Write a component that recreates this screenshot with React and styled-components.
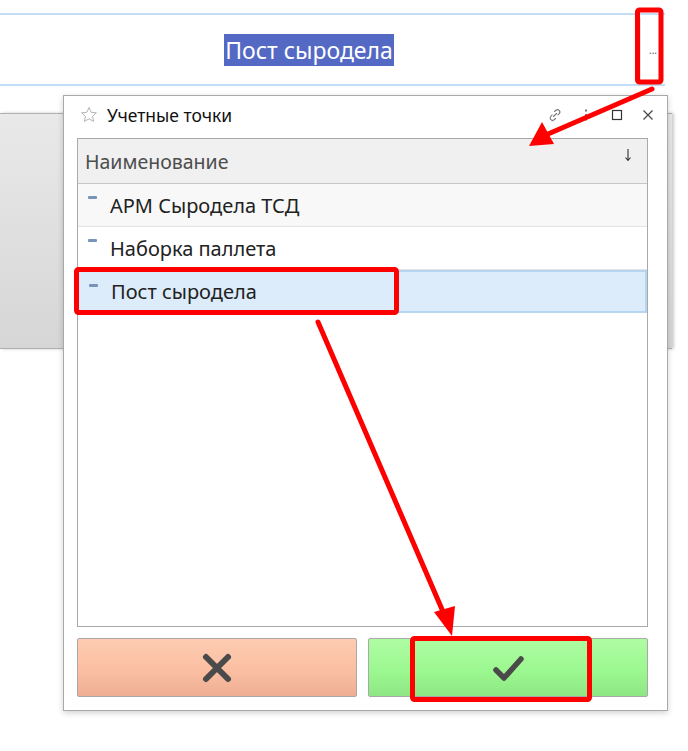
import React from 'react';
import styled, { createGlobalStyle } from 'styled-components';

const GlobalStyle = createGlobalStyle`
  *, *::before, *::after {
    box-sizing: border-box;
  }
  html, body {
    margin: 0;
    padding: 0;
    background: #fff;
  }
  body {
    font-family: "Noto Sans", "Open Sans", sans-serif;
  }
`;

const rows = [
  { id: 1, name: 'АРМ Сыродела ТСД' },
  { id: 2, name: 'Наборка паллета' },
  { id: 3, name: 'Пост сыродела', selected: true },
];

export default function App() {
  return (
    <Page>
      <GlobalStyle />
      <Field>
        <FieldValue>
          <Selected>Пост сыродела</Selected>
        </FieldValue>
        <FieldButton>...</FieldButton>
      </Field>

      <BackPanel />

      <Dialog>
        <TitleBar>
          <Star viewBox="0 0 18 18">
            <path
              d="M9 1.5l2.2 4.8 5.2.5-3.9 3.5 1.1 5.1L9 12.8l-4.6 2.6 1.1-5.1-3.9-3.5 5.2-.5z"
              fill="none"
              stroke="#b4b4b4"
              strokeWidth="1"
            />
          </Star>
          <Title>Учетные точки</Title>
          <TitleTools>
            <Tool viewBox="0 0 16 16" width="16" height="16">
              <path
                d="M6.5 9.5l3-3M7.5 4.5l1.2-1.2a2.4 2.4 0 0 1 3.4 3.4L10.9 8M8.5 11.5l-1.2 1.2a2.4 2.4 0 0 1-3.4-3.4L5.1 8"
                fill="none"
                stroke="#777"
                strokeWidth="1.1"
                strokeLinecap="round"
              />
            </Tool>
            <Tool viewBox="0 0 16 16" width="16" height="16">
              <rect x="7" y="2.5" width="2" height="2" fill="#777" />
              <rect x="7" y="7" width="2" height="2" fill="#777" />
              <rect x="7" y="11.5" width="2" height="2" fill="#777" />
            </Tool>
            <Tool viewBox="0 0 16 16" width="16" height="16">
              <rect x="3.5" y="3.5" width="9" height="9" fill="none" stroke="#333" strokeWidth="1.2" />
            </Tool>
            <Tool viewBox="0 0 16 16" width="16" height="16">
              <path d="M3.5 3.5l9 9M12.5 3.5l-9 9" stroke="#444" strokeWidth="1.2" />
            </Tool>
          </TitleTools>
        </TitleBar>

        <Table>
          <HeaderRow>
            <HeaderCell>Наименование</HeaderCell>
            <SortArrow viewBox="0 0 8 14" width="8" height="14">
              <path d="M4 1v11M1.5 9.5L4 12.5l2.5-3" fill="none" stroke="#333" strokeWidth="1.1" />
            </SortArrow>
          </HeaderRow>
          {rows.map((r, i) => (
            <Row key={r.id} $selected={r.selected} $shaded={i === 0}>
              <Marker />
              <RowText>{r.name}</RowText>
            </Row>
          ))}
        </Table>

        <Buttons>
          <ActionButton $kind="cancel">
            <svg width="34" height="34" viewBox="0 0 34 34">
              <path d="M6 6l22 22M28 6L6 28" stroke="#4a4a4a" strokeWidth="6" strokeLinecap="round" />
            </svg>
          </ActionButton>
          <ActionButton $kind="ok">
            <svg width="34" height="30" viewBox="0 0 34 30">
              <path d="M5 17l8 8L30 6" fill="none" stroke="#4a4a4a" strokeWidth="5.5" strokeLinecap="round" strokeLinejoin="round" />
            </svg>
          </ActionButton>
        </Buttons>
      </Dialog>

      <Marks width="688" height="751" viewBox="0 0 688 751">
        <g fill="none" stroke="#ff0000" strokeWidth="5" strokeLinejoin="round">
          <rect x="637.5" y="10" width="23.5" height="72" rx="2" />
          <rect x="76.5" y="269.5" width="320" height="43" rx="2" />
          <rect x="412.5" y="638.5" width="177" height="61" rx="2" />
          <line x1="652" y1="89" x2="548" y2="134" strokeLinecap="round" />
          <line x1="318" y1="322" x2="444" y2="614" strokeLinecap="round" />
        </g>
        <g fill="#ff0000">
          <polygon points="529,146 542,122 554,144" />
          <polygon points="452,636 434,612 455,606" />
        </g>
      </Marks>
    </Page>
  );
}

const Page = styled.div`
  position: relative;
  width: 688px;
  height: 751px;
  overflow: hidden;
  background: #fff;
`;

const Field = styled.div`
  margin-top: 13px;
  width: 665px;
  height: 73px;
  display: flex;
  border-top: 2px solid #c2ddf5;
  border-bottom: 2px solid #c2ddf5;
`;

const FieldValue = styled.div`
  flex: 1;
  display: flex;
  align-items: center;
  justify-content: center;
  padding-right: 22px;
`;

const Selected = styled.span`
  background: #5469c3;
  color: #fff;
  font-size: 23px;
  line-height: 32px;
  height: 32px;
  padding: 0 1px;
`;

const FieldButton = styled.div`
  width: 25px;
  display: flex;
  align-items: center;
  justify-content: center;
  font-size: 10px;
  color: #555;
  border-left: 1px solid #e2e2e2;
  margin: 3px 0;
`;

const BackPanel = styled.div`
  margin-top: 27px;
  width: 672px;
  height: 236px;
  border-top: 1px solid #b0b0b0;
  border-bottom: 1px solid #b0b0b0;
  background: linear-gradient(#e9e9e9, #d6d6d6);
  box-shadow: 2px 0 3px rgba(0, 0, 0, 0.2);
`;

const Dialog = styled.div`
  position: absolute;
  left: 63px;
  top: 95px;
  width: 605px;
  height: 616px;
  border: 1px solid #a9a9a9;
  background: #fff;
  box-shadow: 0 2px 6px rgba(0, 0, 0, 0.18);
  display: flex;
  flex-direction: column;
  padding: 0 19px 13px 13px;
`;

const TitleBar = styled.div`
  height: 42px;
  flex: none;
  display: flex;
  align-items: center;
  gap: 9px;
  padding: 0 0 4px 3px;
`;

const Star = styled.svg`
  width: 18px;
  height: 18px;
`;

const Title = styled.div`
  font-size: 17.5px;
  color: #111;
  flex: 1;
`;

const TitleTools = styled.div`
  display: flex;
  align-items: center;
  gap: 15px;
  margin-right: -8px;
`;

const Tool = styled.svg`
  display: block;
`;

const Table = styled.div`
  flex: 1;
  border: 1px solid #a9a9a9;
  display: flex;
  flex-direction: column;
`;

const HeaderRow = styled.div`
  height: 45px;
  flex: none;
  background: #f0f0f0;
  border-bottom: 1px solid #c6c6c6;
  display: flex;
  align-items: center;
  padding: 0 15px 0 7px;
`;

const HeaderCell = styled.div`
  flex: 1;
  font-size: 19.5px;
  color: #4d4d4d;
`;

const SortArrow = styled.svg`
  align-self: flex-start;
  margin-top: 9px;
`;

const Row = styled.div`
  height: 43px;
  flex: none;
  display: flex;
  align-items: center;
  padding: 0 0 0 10px;
  border-bottom: 1px solid #e3e3e3;
  background: ${p => (p.$selected ? '#dcecfb' : p.$shaded ? '#f8f8f8' : '#fff')};
  ${p => p.$selected && 'border: 1px solid #b4d6f3; border-width: 2px 2px 2px 1px;'}
`;

const Marker = styled.div`
  width: 9px;
  height: 3px;
  background: #7795b8;
  border-radius: 1px;
  align-self: flex-start;
  margin-top: 12px;
  margin-right: 13px;
`;

const RowText = styled.div`
  font-size: 20px;
  color: #222;
`;

const Buttons = styled.div`
  display: grid;
  grid-template-columns: 1fr 1fr;
  gap: 11px;
  margin-top: 11px;
  height: 59px;
  flex: none;
`;

const ActionButton = styled.div`
  border: 1px solid #a8a8a8;
  border-radius: 2px;
  display: flex;
  align-items: center;
  justify-content: center;
  background: ${p =>
    p.$kind === 'ok'
      ? 'linear-gradient(#aefca2, #9cf890 55%, #8ee784)'
      : 'linear-gradient(#fdccb2, #fbbfa2 55%, #eeae95)'};
`;

const Marks = styled.svg`
  position: absolute;
  left: 0;
  top: 0;
  pointer-events: none;
`;
